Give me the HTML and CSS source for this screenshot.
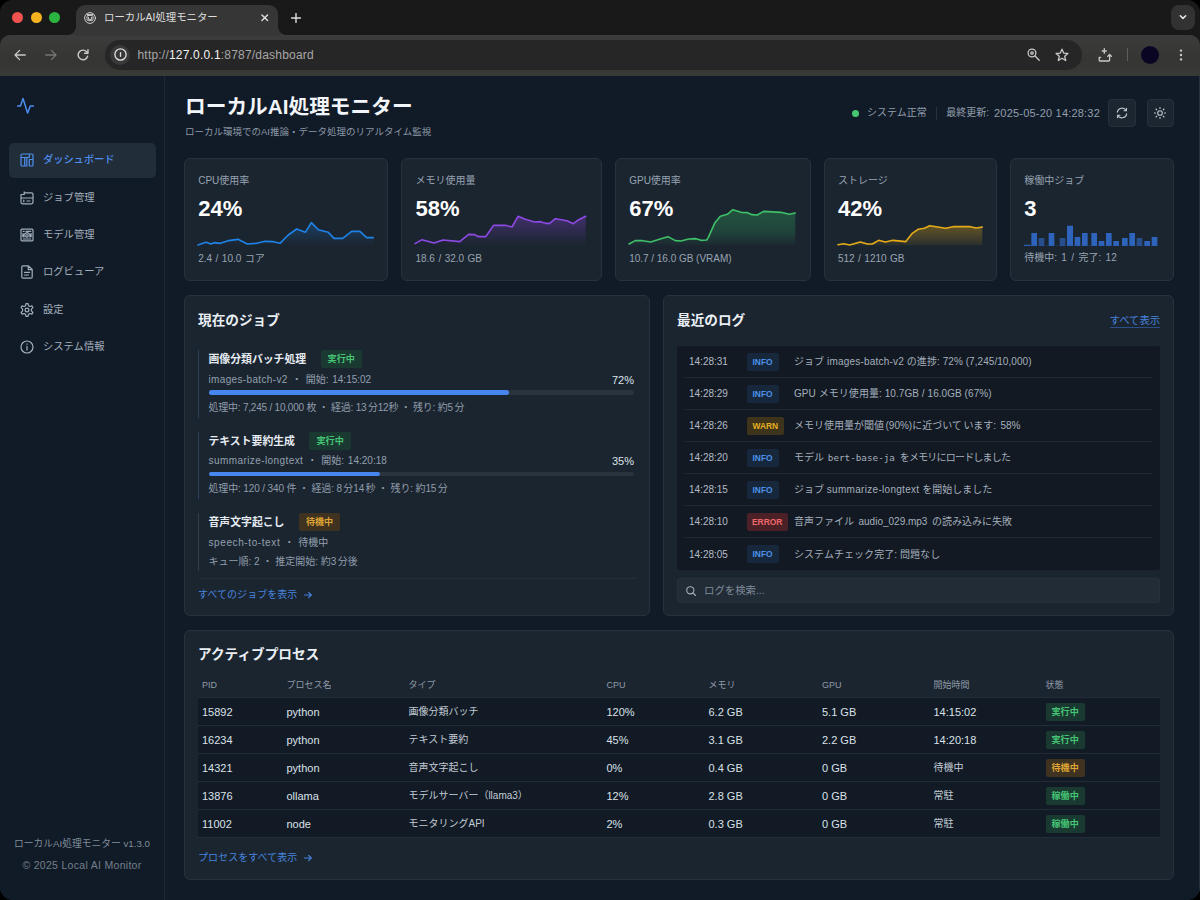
FILE: index.html
```html
<!DOCTYPE html>
<html lang="ja">
<head>
<meta charset="utf-8">
<title>ローカルAI処理モニター</title>
<link rel="stylesheet" href="styles.css">
</head>
<body>
<div class="window">
  <div class="tabstrip">
    <div class="lights"><i class="light red"></i><i class="light yellow"></i><i class="light green"></i></div>
    <div class="tab">
      <svg class="favicon" viewBox="0 0 12 12"><circle cx="6" cy="6" r="5.4"/><rect x="3" y="3.4" width="6" height="5.2" rx="1.2"/><path d="M4.5 5.3v1.2M7.5 5.3v1.2M4.6 7.4h2.8M3 2.6h6"/></svg>
      <span class="tab-title">ローカルAI処理モニター</span>
      <svg class="tab-close" viewBox="0 0 8 8"><path d="M1 1l6 6M7 1L1 7"/></svg>
    </div>
    <svg class="tab-new" viewBox="0 0 10 10"><path d="M5 .5v9M.5 5h9"/></svg>
    <div class="tab-menu"><svg viewBox="0 0 8 8"><path d="M1.3 2.7L4 5.4l2.7-2.7"/></svg></div>
  </div>
  <div class="toolbar">
    <svg class="tb back" viewBox="0 0 12 12"><path d="M11.3 6H1M5.6 1.4L1 6l4.6 4.6"/></svg>
    <svg class="tb forward" viewBox="0 0 12 12"><path d="M.7 6H11M6.4 1.4L11 6l-4.6 4.6"/></svg>
    <svg class="tb reload" viewBox="0 0 12 12"><path d="M10.6 7.2A4.8 4.8 0 1 1 9.6 2.8L11 4.2M11 .8v3.5H7.5"/></svg>
    <div class="omnibox">
      <div class="site"><svg viewBox="0 0 12 12"><circle cx="6" cy="6" r="5.2"/><path d="M6 4.3v3.4"/></svg></div>
      <span class="url">http://<b>127.0.0.1</b>:8787/dashboard</span>
      <svg class="tb lens" viewBox="0 0 13 13"><circle cx="5" cy="5" r="3.9"/><circle cx="5" cy="5" r="1.2"/><path d="M8 8l4.2 4.2"/></svg>
      <svg class="tb star" viewBox="0 0 14 14"><path d="M7 1.2l1.7 3.9 4.2.4-3.2 2.8 1 4.2L7 10.3l-3.7 2.2 1-4.2L1.100 5.500l4.200-.4z"/></svg>
    </div>
    <svg class="tb share" viewBox="0 0 14 14"><path d="M2.600 9.400H1.200V12.200q0 .8.800.8h8.800q.8 0 .8-.8V7M6.300.7v4.600M4.300 3l2-.2 2 .2M9.700 8.400l1.900-1.900 1.900 1.900"/></svg>
    <i class="tb-sep"></i>
    <i class="avatar"></i>
    <svg class="tb more" viewBox="0 0 4 12"><circle cx="2" cy="1.600" r="1.200"/><circle cx="2" cy="6" r="1.200"/><circle cx="2" cy="10.400" r="1.200"/></svg>
  </div>
  <div class="app">
    <aside class="sidebar">
      <svg class="logo" viewBox="0 0 17 17"><path d="M.5 9h3L6 1.500l4.600 14.500L13.300 9h3.200"/></svg>
      <nav class="nav">
        <a class="nav-item active"><svg viewBox="0 0 14 14"><path d="M1 4.500V2.300Q1 1 2.300 1h9.400Q13 1 13 2.300v9.400q0 1.300-1.300 1.300H9.300V6.500H13M1 4.500v7.200Q1 13 2.300 13H4.700V4.500zM6.800 13V4.500h2.500V1M4.700 4.500h2.100M6.800 10v3H4.700"/></svg>ダッシュボード</a>
        <a class="nav-item"><svg viewBox="0 0 14 14"><path d="M4 1.800h7.500q1.500 0 1.500 1.500v8q0 1.500-1.500 1.500h-9Q1 12.800 1 11.300V3.500M1 7h12M1 3.500h3.200V.8M3.800 9v1.800M7 10h3"/></svg>ジョブ管理</a>
        <a class="nav-item"><svg viewBox="0 0 14 14"><rect x="1" y="1.200" width="12" height="11.600" rx="1"/><path d="M3.200 3.300h1M6 3.300h4.800M3.200 11h7.600M4.100 9V6.300L7 4.500l2.900 1.800V9M2.900 5.500v3.200M11.100 5.500v3.200"/><circle cx="7" cy="7.800" r="1.300"/></svg>モデル管理</a>
        <a class="nav-item"><svg viewBox="0 0 14 14"><path d="M3 .8h5.500L12.200 4.500v7.500q0 1.200-1.200 1.200H3q-1.200 0-1.200-1.200V2Q1.800.8 3 .8zM8.300 1v3.700h3.700M4.500 7.300h5M4.500 10h4"/></svg>ログビューア</a>
        <a class="nav-item"><svg viewBox="0 0 14 14"><path d="M5.500 2.700L6 .7h2l.5 2 1.400.8 2-.6 1 1.700L11.400 6.200v1.600l1.500 1.600-1 1.700-2-.6-1.400.8-.5 2H6l-.5-2-1.400-.8-2 .6-1-1.700 1.500-1.600V6.200L1.100 4.600l1-1.700 2 .6z"/><circle cx="7" cy="7" r="1.900"/></svg>設定</a>
        <a class="nav-item"><svg viewBox="0 0 14 14"><circle cx="7" cy="7" r="6"/><path d="M7 6.300v3.800M7 3.800v.4"/></svg>システム情報</a>
      </nav>
      <div class="side-foot"><div class="ver">ローカルAI処理モニター v1.3.0</div><div class="copy">© 2025 Local AI Monitor</div></div>
    </aside>
    <main class="main">
      <header class="head">
        <div>
          <h1>ローカルAI処理モニター</h1>
          <p class="sub">ローカル環境でのAI推論・データ処理のリアルタイム監視</p>
        </div>
        <div class="status">
          <i class="dot"></i><span class="ok">システム正常</span><i class="vsep"></i><span class="upd">最終更新:</span><span class="stamp">2025-05-20 14:28:32</span>
          <button class="icon-btn"><svg viewBox="0 0 12 12"><path d="M1.300 5.200A4.800 4.800 0 0 1 10.200 3.600M10.700 6.800A4.800 4.800 0 0 1 1.800 8.400M10.500 1.200v2.600H8M1.500 10.800V8.200H4"/></svg></button>
          <button class="icon-btn"><svg viewBox="0 0 12 12"><circle cx="6" cy="6" r="2.300"/><path d="M6 .3v1.200M6 10.500v1.200M.3 6h1.200M10.500 6h1.200M2 2l.8.8M9.200 9.200l.8.8M2 10l.8-.8M9.200 2.800L10 2"/></svg></button>
        </div>
      </header>

      <section class="cards">
        <div class="card">
          <div class="label">CPU使用率</div><div class="value">24%</div>
          <svg class="chart cpu" viewBox="54 174 526 114" preserveAspectRatio="none"><defs><linearGradient id="gc" x1="0" y1="215" x2="0" y2="286" gradientUnits="userSpaceOnUse"><stop offset="0" stop-color="#1d83e8" stop-opacity=".3"/><stop offset="1" stop-color="#1d83e8" stop-opacity="0"/></linearGradient></defs><path class="area" fill="url(#gc)" d="M54 285L78 277 93 282 102 278 121 280 145 272 174 268 202 282 230 280 255 274 280 275 300 280 325 255 350 237 376 247 394 218 415 239 445 247 462 265 488 265 515 244 540 244 560 263 580 263V286H54z"/><path class="line" d="M54 285L78 277 93 282 102 278 121 280 145 272 174 268 202 282 230 280 255 274 280 275 300 280 325 255 350 237 376 247 394 218 415 239 445 247 462 265 488 265 515 244 540 244 560 263 580 263"/></svg>
          <div class="foot">2.4 / 10.0 コア</div>
        </div>
        <div class="card">
          <div class="label">メモリ使用量</div><div class="value">58%</div>
          <svg class="chart mem" viewBox="709 174 512 114" preserveAspectRatio="none"><defs><linearGradient id="gm" x1="0" y1="198" x2="0" y2="286" gradientUnits="userSpaceOnUse"><stop offset="0" stop-color="#8a46e0" stop-opacity=".34"/><stop offset="1" stop-color="#8a46e0" stop-opacity="0"/></linearGradient></defs><path class="area" fill="url(#gm)" d="M709 281L730 269 766 279 793 270 843 275 870 253 888 254 900 260 921 260 945 226 980 226 1000 231 1018 199 1040 208 1068 216 1085 215 1100 220 1113 220 1130 206 1165 212 1184 221 1200 209 1221 199V286H709z"/><path class="line" d="M709 281L730 269 766 279 793 270 843 275 870 253 888 254 900 260 921 260 945 226 980 226 1000 231 1018 199 1040 208 1068 216 1085 215 1100 220 1113 220 1130 206 1165 212 1184 221 1200 209 1221 199"/></svg>
          <div class="foot">18.6 / 32.0 GB</div>
        </div>
        <div class="card">
          <div class="label">GPU使用率</div><div class="value">67%</div>
          <svg class="chart gpu" viewBox="89 174 499 114" preserveAspectRatio="none"><defs><linearGradient id="gg" x1="0" y1="180" x2="0" y2="286" gradientUnits="userSpaceOnUse"><stop offset="0" stop-color="#2fa45a" stop-opacity=".36"/><stop offset=".6" stop-color="#2fa45a" stop-opacity=".25"/><stop offset="1" stop-color="#2fa45a" stop-opacity=".03"/></linearGradient></defs><path class="area" fill="url(#gg)" d="M89 282L108 272 130 272 154 276 185 266 206 260 228 272 245 273 268 267 290 266 305 271 322 270 327 262 347 218 363 199 384 193 401 179 425 187 445 188 458 194 474 195 493 184 545 187 570 193 588 189V286H89z"/><path class="line" d="M89 282L108 272 130 272 154 276 185 266 206 260 228 272 245 273 268 267 290 266 305 271 322 270 327 262 347 218 363 199 384 193 401 179 425 187 445 188 458 194 474 195 493 184 545 187 570 193 588 189"/></svg>
          <div class="foot vram">10.7 / 16.0 GB (VRAM)</div>
        </div>
        <div class="card">
          <div class="label">ストレージ</div><div class="value">42%</div>
          <svg class="chart sto" viewBox="715 174 433 114" preserveAspectRatio="none"><defs><linearGradient id="gs" x1="0" y1="228" x2="0" y2="286" gradientUnits="userSpaceOnUse"><stop offset="0" stop-color="#d9a016" stop-opacity=".38"/><stop offset="1" stop-color="#d9a016" stop-opacity=".08"/></linearGradient></defs><path class="area" fill="url(#gs)" d="M715 284L732 281 750 285 782 276 803 282 818 282 837 271 857 276 880 271 918 275 938 250 955 238 974 235 990 227 1038 235 1060 230 1112 230 1130 234 1148 231V286H715z"/><path class="line" d="M715 284L732 281 750 285 782 276 803 282 818 282 837 271 857 276 880 271 918 275 938 250 955 238 974 235 990 227 1038 235 1060 230 1112 230 1130 234 1148 231"/></svg>
          <div class="foot">512 / 1210 GB</div>
        </div>
        <div class="card">
          <div class="label">稼働中ジョブ</div><div class="value">3</div>
          <svg class="chart bars" viewBox="136 174 405 114" preserveAspectRatio="none"><path d="M136 284h20v4h-20zM158 249h17v39h-17zM210 249h17v39h-17zM265 227h18v61h-18zM288 261h17v27h-17zM310 249h17v39h-17zM338 249h17v39h-17zM360 273h17v15h-17zM382 249h17v39h-17zM404 273h17v15h-17zM430 264h17v24h-17zM452 249h17v39h-17zM497 273h17v15h-17zM519 261h17v27h-17z"/><path class="dim" d="M180 264h17v24h-17zM243 264h17v24h-17zM474 264h17v24h-17z"/><path class="base" d="M136 287h405v1H136z"/></svg>
          <div class="foot up">待機中: 1 / 完了: 12</div>
        </div>
      </section>

      <section class="middle">
        <div class="panel jobs">
          <h2>現在のジョブ</h2>
          <div class="job">
            <div class="job-title"><b>画像分類バッチ処理</b><span class="badge run">実行中</span></div>
            <div class="job-sub"><span><span class="s1">images-batch-v2</span><i class="sep">・</i>開始: 14:15:02</span><span class="pct">72%</span></div>
            <div class="bar"><i style="width:70.700%"></i></div>
            <div class="job-meta m1">処理中: 7,245 / 10,000 枚 ・ 経過: 13<u></u>分12秒 ・ 残り: 約5<u></u>分</div>
          </div>
          <div class="job">
            <div class="job-title"><b>テキスト要約生成</b><span class="badge run">実行中</span></div>
            <div class="job-sub"><span><span class="s2">summarize-longtext</span><i class="sep">・</i>開始: 14:20:18</span><span class="pct">35%</span></div>
            <div class="bar"><i style="width:40.200%"></i></div>
            <div class="job-meta m2">処理中: 120 / 340 件 ・ 経過: 8<u></u>分14<u></u>秒 ・ 残り: 約15<u></u>分</div>
          </div>
          <div class="job wait">
            <div class="job-title"><b>音声文字起こし</b><span class="badge pend">待機中</span></div>
            <div class="job-sub"><span><span class="s3">speech-to-text</span><i class="sep">・</i>待機中</span></div>
            <div class="job-meta">キュー順: 2 ・ 推定開始: 約3<u></u>分後</div>
          </div>
          <div class="more-row"><a class="link">すべてのジョブを表示<svg viewBox="0 0 8 8"><path d="M.5 4h6.800M4.600 1.400L7.300 4 4.600 6.600"/></svg></a></div>
        </div>

        <div class="panel logs">
          <div class="panel-head"><h2>最近のログ</h2><a class="all">すべて表示</a></div>
          <div class="log-list">
            <div class="log"><time>14:28:31</time><span class="lv"><b class="info">INFO</b></span><span class="msg wide">ジョブ <span class="w1">images-batch-v2</span> の進捗: 72% (7,245/10,000)</span></div>
            <div class="log"><time>14:28:29</time><span class="lv"><b class="info">INFO</b></span><span class="msg wide">GPU メモリ使用量: 10.7GB / 16.0GB (67%)</span></div>
            <div class="log"><time>14:28:26</time><span class="lv"><b class="warn">WARN</b></span><span class="msg">メモリ使用量が閾値<u></u>(90%)に近づいて<u></u>います:<u></u> 58%<u></u></span></div>
            <div class="log"><time>14:28:20</time><span class="lv"><b class="info">INFO</b></span><span class="msg">モデル <code>bert-base-ja</code> <span class="w4">をメモリにロードしました</span></span></div>
            <div class="log"><time>14:28:15</time><span class="lv"><b class="info">INFO</b></span><span class="msg">ジョブ <span class="w5">summarize-longtext</span> を開始しました</span></div>
            <div class="log"><time>14:28:10</time><span class="lv"><b class="error">ERROR</b></span><span class="msg w6">音声ファイル <span>audio_029.mp3</span> の読み込みに失敗</span></div>
            <div class="log"><time>14:28:05</time><span class="lv"><b class="info">INFO</b></span><span class="msg wide">システムチェック完了: 問題なし</span></div>
          </div>
          <div class="search"><svg viewBox="0 0 10 10"><circle cx="4.300" cy="4.300" r="3.600"/><path d="M7 7l2.500 2.500"/></svg>ログを検索...</div>
        </div>
      </section>

      <section class="panel procs">
        <h2>アクティブプロセス</h2>
        <div class="row th"><span>PID</span><span>プロセス名</span><span>タイプ</span><span>CPU</span><span>メモリ</span><span>GPU</span><span>開始時間</span><span>状態</span></div>
        <div class="row"><span>15892</span><span>python</span><span class="ja">画像分類バッチ</span><span>120%</span><span>6.2 GB</span><span>5.1 GB</span><span>14:15:02</span><span><b class="badge run">実行中</b></span></div>
        <div class="row"><span>16234</span><span>python</span><span class="ja">テキスト要約</span><span>45%</span><span>3.1 GB</span><span>2.2 GB</span><span>14:20:18</span><span><b class="badge run">実行中</b></span></div>
        <div class="row"><span>14321</span><span>python</span><span class="ja">音声文字起こし</span><span>0%</span><span>0.4 GB</span><span>0 GB</span><span class="ja">待機中</span><span><b class="badge pend">待機中</b></span></div>
        <div class="row"><span>13876</span><span>ollama</span><span class="ja">モデルサーバー（llama3）</span><span>12%</span><span>2.8 GB</span><span>0 GB</span><span class="ja">常駐</span><span><b class="badge run">稼働中</b></span></div>
        <div class="row"><span>11002</span><span>node</span><span class="ja">モニタリングAPI</span><span>2%</span><span>0.3 GB</span><span>0 GB</span><span class="ja">常駐</span><span><b class="badge run">稼働中</b></span></div>
        <a class="link">プロセスをすべて表示<svg viewBox="0 0 8 8"><path d="M.5 4h6.800M4.600 1.400L7.300 4 4.600 6.600"/></svg></a>
      </section>
    </main>
  </div>
</div>
</body>
</html>
```
FILE: styles.css
```css
* { box-sizing: border-box; }
html { background: #000; }
body { margin: 0; width: 1200px; height: 900px; overflow: hidden; font: 10px/16px "Liberation Sans", "Noto Sans CJK JP", sans-serif; color: #a9b4c1; white-space: nowrap; }
svg { display: block; fill: none; stroke: currentColor; stroke-linecap: round; stroke-linejoin: round; flex: none; }
h1, h2, p { margin: 0; }
i, code, u { font-style: normal; text-decoration: none; }
u { display: inline-block; width: 1.5px; }

.window { width: 1200px; height: 900px; display: flex; flex-direction: column; border-radius: 13px; overflow: hidden; background: #191919; }

/* browser chrome */
.tabstrip { height: 35px; display: flex; align-items: flex-start; background: #191919; flex: none; }
.lights { display: flex; gap: 7.500px; padding: 12px 0 0 12px; width: 76px; }
.light { width: 11px; height: 11px; border-radius: 50%; }
.red { background: #f0524f; }
.yellow { background: #f4b31f; }
.green { background: #2bb540; }
.tab { position: relative; width: 202px; height: 31px; margin-top: 5px; padding: 0 9.500px 5px 8px; display: flex; align-items: center; background: #363636; border-radius: 9px 9px 0 0; color: #dedede; }
.tab::before, .tab::after { content: ""; position: absolute; bottom: 1px; width: 8px; height: 8px; }
.tab::before { left: -8px; background: radial-gradient(circle at 0 0, transparent 7.500px, #363636 8px); }
.tab::after { right: -8px; background: radial-gradient(circle at 100% 0, transparent 7.500px, #363636 8px); }
.favicon { width: 12px; height: 12px; stroke-width: .9; }
.tab-title { margin-left: 8px; font-size: 10.400px; }
.tab-close { width: 7.500px; height: 7.500px; margin-left: auto; stroke-width: 1.500; }
.tab-new { width: 10px; height: 10px; margin: 12.500px 0 0 12.500px; color: #dedede; stroke-width: 1.400; }
.tab-menu { width: 24.500px; height: 24.500px; margin: 5px 5px 0 auto; display: flex; align-items: center; justify-content: center; border-radius: 8px; background: #323232; color: #e8e8e8; }
.tab-menu svg { width: 8px; height: 8px; stroke-width: 1.500; }
.toolbar { height: 41px; flex: none; display: flex; align-items: center; padding: 0 0 2px 14px; background: linear-gradient(#3c3c3c, #353533 60%, #393936); border-radius: 10px 10px 0 0; color: #c9c9c9; }
.tb { width: 12px; height: 12px; stroke-width: 1.300; }
.forward { margin-left: 18.500px; color: #757575; }
.reload { margin-left: 20px; stroke-width: 1.400; }
.omnibox { width: 977px; height: 30px; margin-left: 16.500px; padding: 0 13.500px 0 5px; display: flex; align-items: center; border-radius: 15px; background: #262626; }
.site { width: 20px; height: 20px; border-radius: 50%; background: #393939; display: flex; align-items: center; justify-content: center; color: #e2e2e2; }
.site svg { width: 13px; height: 13px; stroke-width: 1.200; }
.url { margin-left: 7.500px; font-size: 12px; letter-spacing: .2px; color: #a6a6a6; }
.url b { font-weight: 400; color: #f2f2f2; }
.lens { margin-left: auto; width: 13px; height: 13px; }
.star { width: 14px; height: 14px; margin-left: 14.500px; }
.share { width: 14px; height: 14px; margin-left: 16px; }
.tb-sep { width: 1px; height: 13px; margin-left: 15px; background: #5d5d5d; }
.avatar { width: 18px; height: 18px; margin-left: 13px; border-radius: 50%; background: #0b0524; }
.more { width: 4px; height: 12px; margin-left: 20px; fill: currentColor; stroke: none; }

/* shell */
.app { flex: 1; display: flex; background: #111b27; min-height: 0; border-right: 1px solid #24303c; }
.sidebar { width: 165px; display: flex; flex-direction: column; padding: 21px 8.500px 0 8.500px; border-right: 1px solid #1d2835; }
.logo { width: 17px; height: 17px; margin-left: 8.500px; color: #4b8df0; stroke-width: 1.500; }
.nav { margin-top: 29px; display: flex; flex-direction: column; gap: 2.900px; }
.nav-item { height: 34.500px; padding-left: 11px; display: flex; align-items: center; gap: 9.500px; border-radius: 5px; font-size: 10.300px; color: #a3afbd; }
.nav-item svg { width: 14px; height: 14px; stroke-width: 1.200; }
.nav-item.active { background: #222d3a; color: #4e8fee; font-weight: 500; letter-spacing: -.1px; }
.side-foot { margin-top: auto; padding-bottom: 24px; text-align: center; color: #7f8b98; line-height: 21.500px; }
.ver { font-size: 9.750px; }
.copy { font-size: 10.500px; letter-spacing: .3px; color: #737f8c; }

.main { width: 1034px; padding: 16.500px 25px 0 19px; }
.head { height: 65.500px; display: flex; justify-content: space-between; }
h1 { margin-left: 1px; font-size: 20.700px; line-height: 27px; font-weight: 700; color: #f2f5f9; }
.sub { margin: 4.500px 0 0 1px; font-size: 9.500px; line-height: 16px; color: #8c98a6; }
.status { margin-top: 6.500px; height: 28px; display: flex; align-items: center; color: #929eac; }
.dot { width: 7px; height: 7px; border-radius: 50%; background: #46c673; margin-right: 8px; }
.vsep { width: 1px; height: 13px; margin: 0 9px 0 9.500px; background: #27323f; }
.stamp { margin-left: 5px; font-size: 11px; letter-spacing: .2px; }
.icon-btn { width: 27.500px; height: 28px; margin: 0 0 0 11px; padding: 0; display: flex; align-items: center; justify-content: center; border: 1px solid #25303c; border-radius: 4px; background: #1c2631; color: #bac4cf; }
.stamp + .icon-btn { margin-left: 8px; }
.icon-btn svg { width: 12px; height: 12px; stroke-width: 1.100; }

/* metric cards */
.cards { display: grid; grid-template-columns: 204px 200.500px 195.500px 173px 164px; gap: 13.250px; }
.card, .panel { background: #1b2530; border: 1px solid #27323d; border-radius: 6px; }
.card { height: 122.500px; padding: 12.500px 0 0 13.200px; }
.label { line-height: 17px; color: #97a3b0; }
.value { margin-top: 6px; height: 25px; line-height: 28px; font-size: 22px; letter-spacing: .1px; font-weight: 700; color: #fff; }
.chart { height: 38px; margin-top: -12px; stroke: none; overflow: visible; }
.chart .line { stroke: currentColor; stroke-width: 1.600; vector-effect: non-scaling-stroke; }
.cpu { width: 175.300px; color: #1f82e6; }
.mem { width: 170.700px; color: #8d49e3; }
.gpu { width: 166.300px; color: #3fbf68; }
.sto { width: 144.300px; color: #e6ac18; }
.bars { width: 135px; fill: #2e64bb; }
.bars .dim { fill: #284f8d; }
.bars .base { fill: #2b5292; }
.foot { margin-top: 5.500px; line-height: 16px; color: #98a4b1; word-spacing: .7px; }
.foot.vram { word-spacing: -.1px; }
.foot.up { margin-top: 4.500px; word-spacing: 1.600px; }

/* jobs and logs */
.middle { display: flex; gap: 13.500px; margin-top: 14.500px; }
.panel { height: 321px; padding: 15px 13px 0; }
.jobs { width: 465.500px; }
.logs { flex: 1; }
h2 { font-size: 13.650px; line-height: 20px; font-weight: 700; color: #eaeff5; }
.job { width: 436px; height: 67.500px; margin-bottom: 14px; padding-left: 9.500px; border-left: 1.500px solid #2b425e; }
.job.wait { height: 58px; margin-bottom: 7px; border-color: #313d49; }
h2 + .job { margin-top: 19px; }
.job-title { display: flex; align-items: center; gap: 14.500px; height: 18.500px; font-size: 10.850px; color: #e6ebf1; }
.badge { height: 18px; padding: 0 7px; line-height: 18px; font-size: 9.100px; font-weight: 700; border-radius: 2px; }
.run { background: #1a3a31; color: #45c474; }
.pend { background: #3f3220; color: #dea435; }
.job-sub { display: flex; justify-content: space-between; margin-top: 3px; color: #93a0ae; word-spacing: 1px; }
.job-sub .sep { display: inline-block; width: 18px; text-align: center; }
.s1 { letter-spacing: .35px; }
.s2 { letter-spacing: .42px; }
.s3 { letter-spacing: .6px; }
.pct { font-size: 11px; color: #dde3ea; }
.bar { height: 4.500px; margin-top: 2.500px; border-radius: 2.500px; background: #2a343f; }
.bar i { display: block; height: 100%; border-radius: 2.500px; background: #4686ee; }
.job-meta { margin-top: 5px; color: #909dab; }
.m1 { letter-spacing: -.22px; }
.m2 { letter-spacing: -.14px; }
.wait .job-meta { margin-top: 3px; }
.more-row { padding-top: 8px; border-top: 1px solid #232e39; width: 438px; }
.link { display: flex; align-items: center; gap: 6.500px; color: #4684de; line-height: 16px; letter-spacing: .05px; }
.link svg { width: 8px; height: 8px; stroke-width: 1.100; }

.panel-head { display: flex; justify-content: space-between; align-items: center; }
.all { font-size: 10.300px; line-height: 12px; color: #4684de; border-bottom: 1px solid #2b4f86; }
.log-list { margin-top: 15px; padding: 0 7px; height: 224px; border-radius: 3px; background: #121922; }
.log { height: 32px; display: flex; align-items: center; padding-left: 5px; border-bottom: 1px solid #1f2831; }
.log:last-child { border: 0; }
.log time { width: 57.500px; padding-top: 1px; color: #b3bcc7; }
.lv { width: 47.500px; display: flex; }
.lv b { height: 18px; padding: 0 6px; line-height: 18px; border-radius: 2px; font-size: 8.400px; }
.lv .error { padding: 0 5.500px; }
.info { background: #17283d; color: #4c92ea; }
.warn { background: #3e331b; color: #e7b020; }
.error { background: #4b2127; color: #f0686a; }
.msg { padding-top: 1px; color: #a4afbc; }
.wide { letter-spacing: .06px; }
.w1 { letter-spacing: .2px; }
.w4 { letter-spacing: -.8px; }
.w5 { letter-spacing: .3px; }
.w6 { word-spacing: 1.700px; }
code { font: 9.300px "DejaVu Sans Mono", monospace; margin: 0 2px 0 1px; }
.search { height: 25.500px; margin-top: 7.500px; padding: 1px 0 0 8px; display: flex; align-items: center; gap: 8px; border-radius: 3px; border: 1px solid #26313c; background: #222c37; color: #7f8b98; font-size: 10.400px; }
.search svg { width: 10px; height: 10px; color: #a4afbb; stroke-width: 1.100; }

/* process table */
.procs { margin-top: 14px; height: 249.500px; padding: 14px 13px 0; }
.row { display: grid; grid-template-columns: 84.500px 122px 198px 102px 113.500px 111.500px 112px 1fr; align-items: center; height: 28px; width: 962px; padding-left: 4px; background: #111a25; border-bottom: 1px solid #212c37; font-size: 11px; color: #dbe1e8; }
.row.th { height: 33px; padding-top: 7px; background: none; font-size: 9px; color: #8f9ba8; }
.row .ja { padding-top: 1px; font-size: 10px; color: #c3cbd5; }
.row > span { display: flex; }
.row .badge { padding: 0 6px; }
.procs .link { margin-top: 12px; }
```
